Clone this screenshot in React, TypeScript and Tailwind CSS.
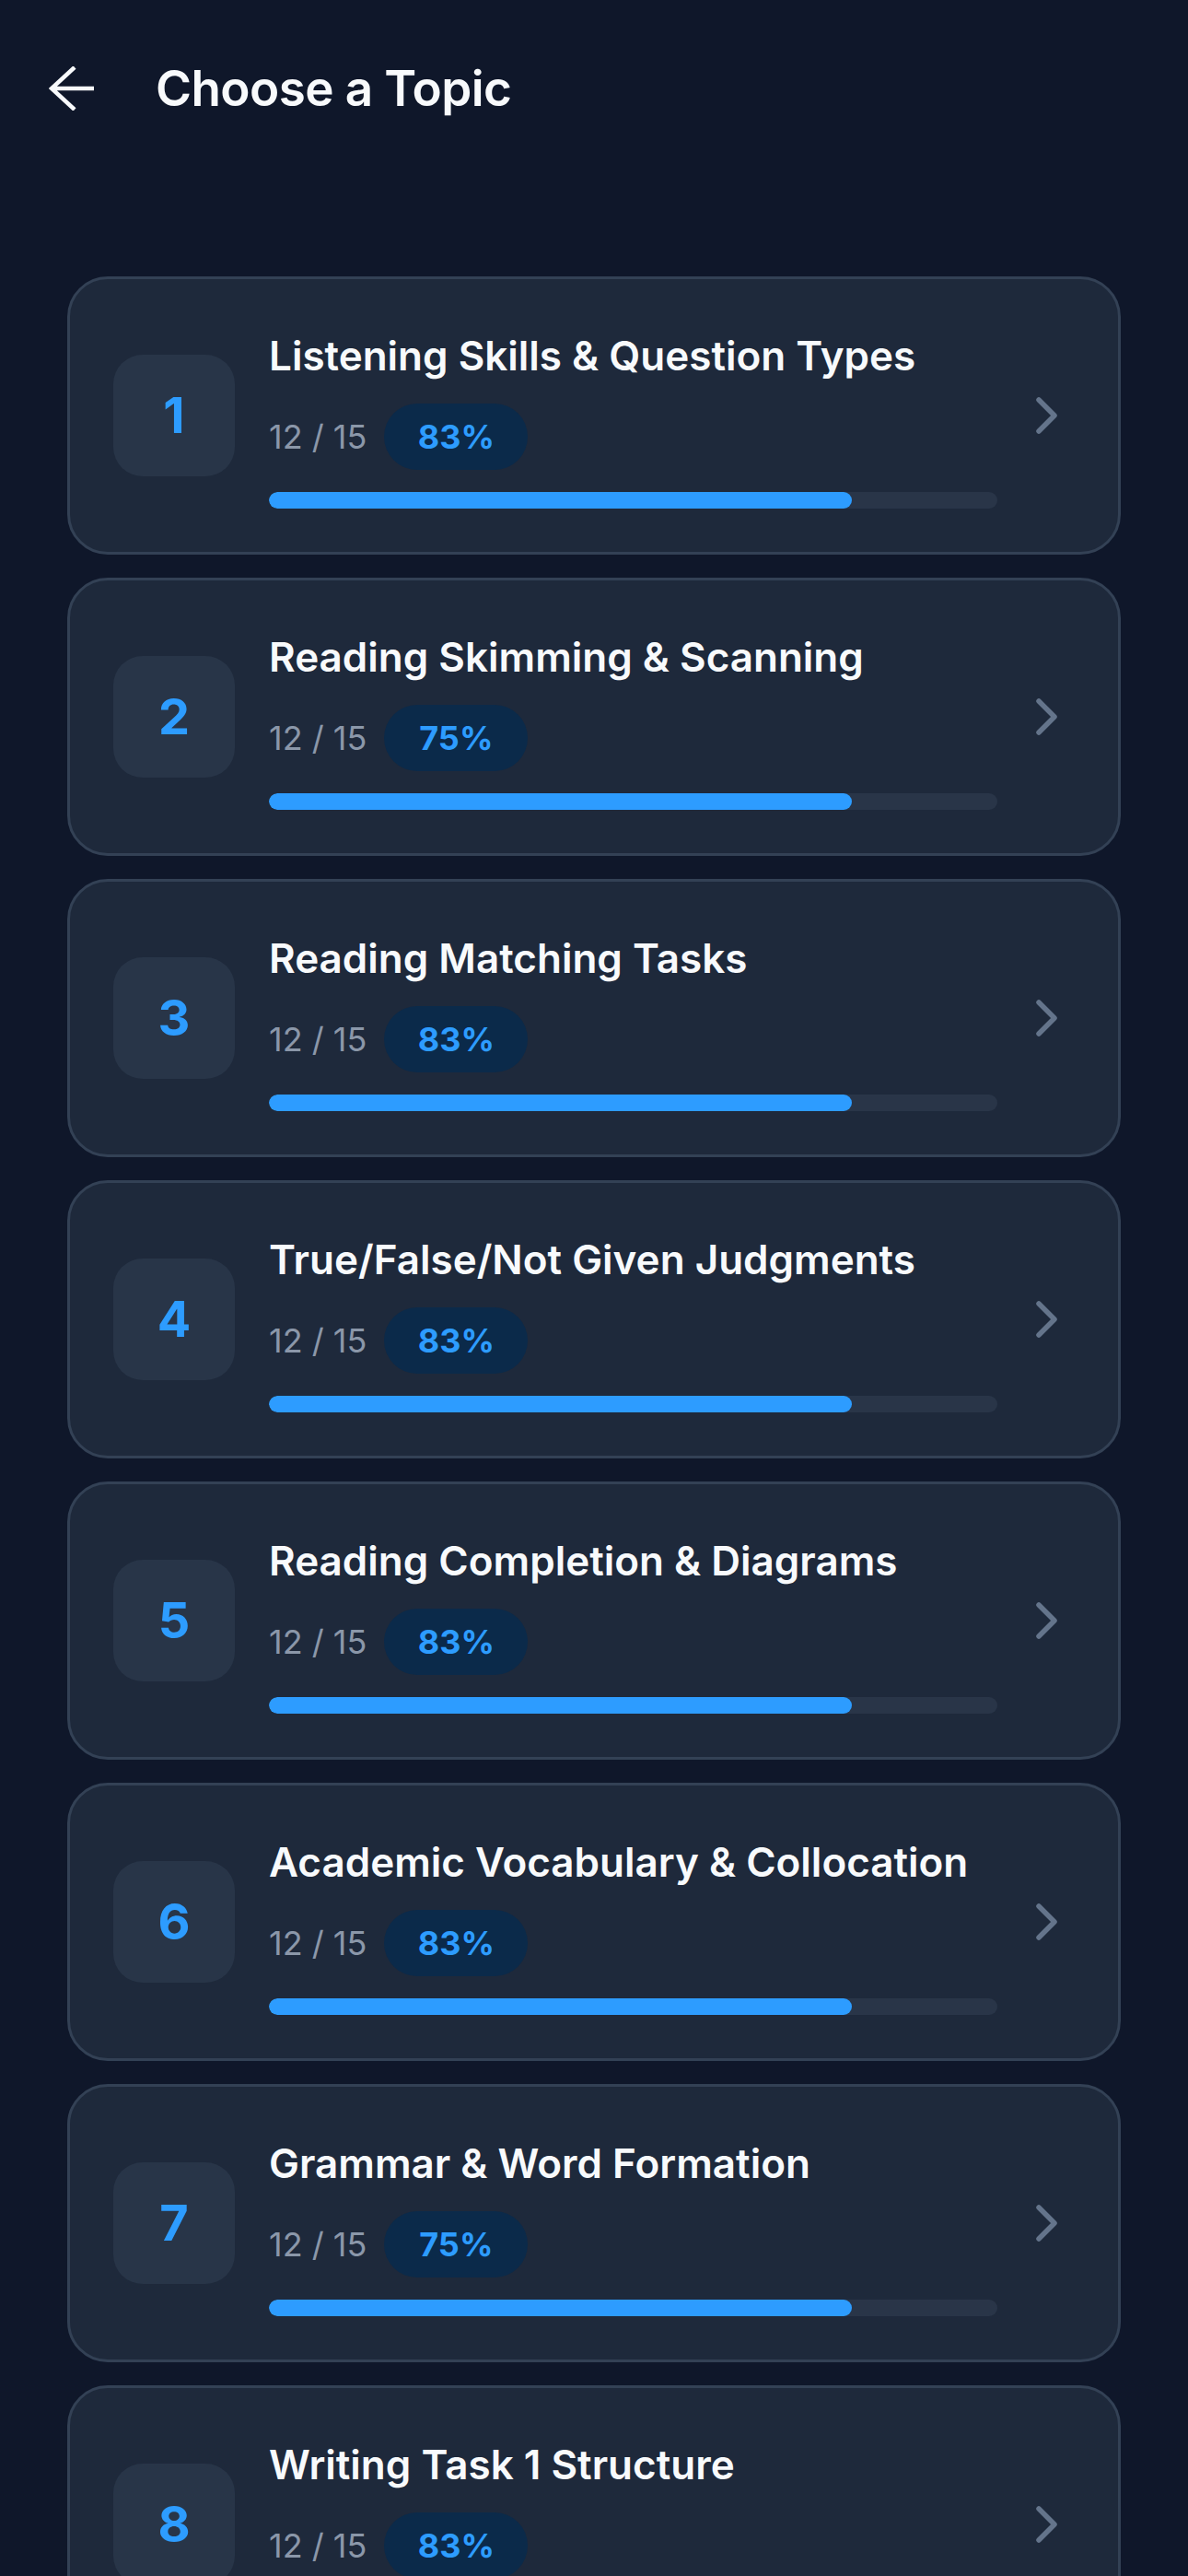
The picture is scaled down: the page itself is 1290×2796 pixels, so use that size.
import React from "react";

const topics = [
  { n: 1, title: "Listening Skills & Question Types", pct: "83%" },
  { n: 2, title: "Reading Skimming & Scanning", pct: "75%" },
  { n: 3, title: "Reading Matching Tasks", pct: "83%" },
  { n: 4, title: "True/False/Not Given Judgments", pct: "83%" },
  { n: 5, title: "Reading Completion & Diagrams", pct: "83%" },
  { n: 6, title: "Academic Vocabulary & Collocation", pct: "83%" },
  { n: 7, title: "Grammar & Word Formation", pct: "75%" },
  { n: 8, title: "Writing Task 1 Structure", pct: "83%" },
  { n: 9, title: "Writing Task 2 Argument", pct: "83%" },
];

function Card({ n, title, pct }: { n: number; title: string; pct: string }) {
  return (
    <div className="flex h-[302px] shrink-0 items-center rounded-[44px] border-[3px] border-[#334155] bg-[#1e293b] pl-[47px] pr-[66px]">
      <div className="flex h-[132px] w-[132px] shrink-0 items-center justify-center rounded-[32px] bg-[#283548] text-[54px] font-bold leading-none text-[#2d9cff]">
        {n}
      </div>
      <div className="ml-[37px] flex min-w-0 flex-1 flex-col pt-[14px]">
        <div className="whitespace-nowrap text-[44px] font-semibold leading-[44px] text-[#f8fafc]">
          {title}
        </div>
        <div className="mt-[30px] flex items-center">
          <span className="text-[36px] leading-none text-[#8b97a9]">12 / 15</span>
          <span className="ml-[19px] flex h-[72px] w-[156px] items-center justify-center rounded-full bg-[#0b2a4a] text-[36px] font-bold leading-none text-[#2d9cff]">
            {pct}
          </span>
        </div>
        <div className="mt-[24px] h-[18px] w-full overflow-hidden rounded-full bg-[#293548]">
          <div className="h-full rounded-full bg-[#2d9cff]" style={{ width: `${(12 / 15) * 100}%` }} />
        </div>
      </div>
      <svg className="ml-[42px] shrink-0" width="23" height="40" viewBox="0 0 23 40" fill="none">
        <path d="M3 3 L20 20 L3 37" stroke="#64748b" strokeWidth="5.5" strokeLinecap="round" strokeLinejoin="round" />
      </svg>
    </div>
  );
}

export default function App() {
  return (
    <div
      className="h-[2796px] w-[1290px] overflow-hidden bg-[#0f172a]"
      style={{ fontFamily: "Inter, 'Noto Sans', sans-serif" }}
    >
      <div className="flex h-[192px] items-center pl-[53px]">
        <svg width="50" height="48" viewBox="0 0 50 48" fill="none">
          <path d="M49 24 H3 M28 1 L3 24 L28 47" stroke="#f8fafc" strokeWidth="4.5" strokeLinecap="butt" strokeLinejoin="miter" />
        </svg>
        <h1 className="ml-[66px] text-[53px] font-semibold leading-none tracking-[-0.6px] text-[#f8fafc]">
          Choose a Topic
        </h1>
      </div>
      <div className="flex flex-col gap-[25px] px-[73px] pt-[108px]">
        {topics.map((t) => (
          <Card key={t.n} {...t} />
        ))}
      </div>
    </div>
  );
}
